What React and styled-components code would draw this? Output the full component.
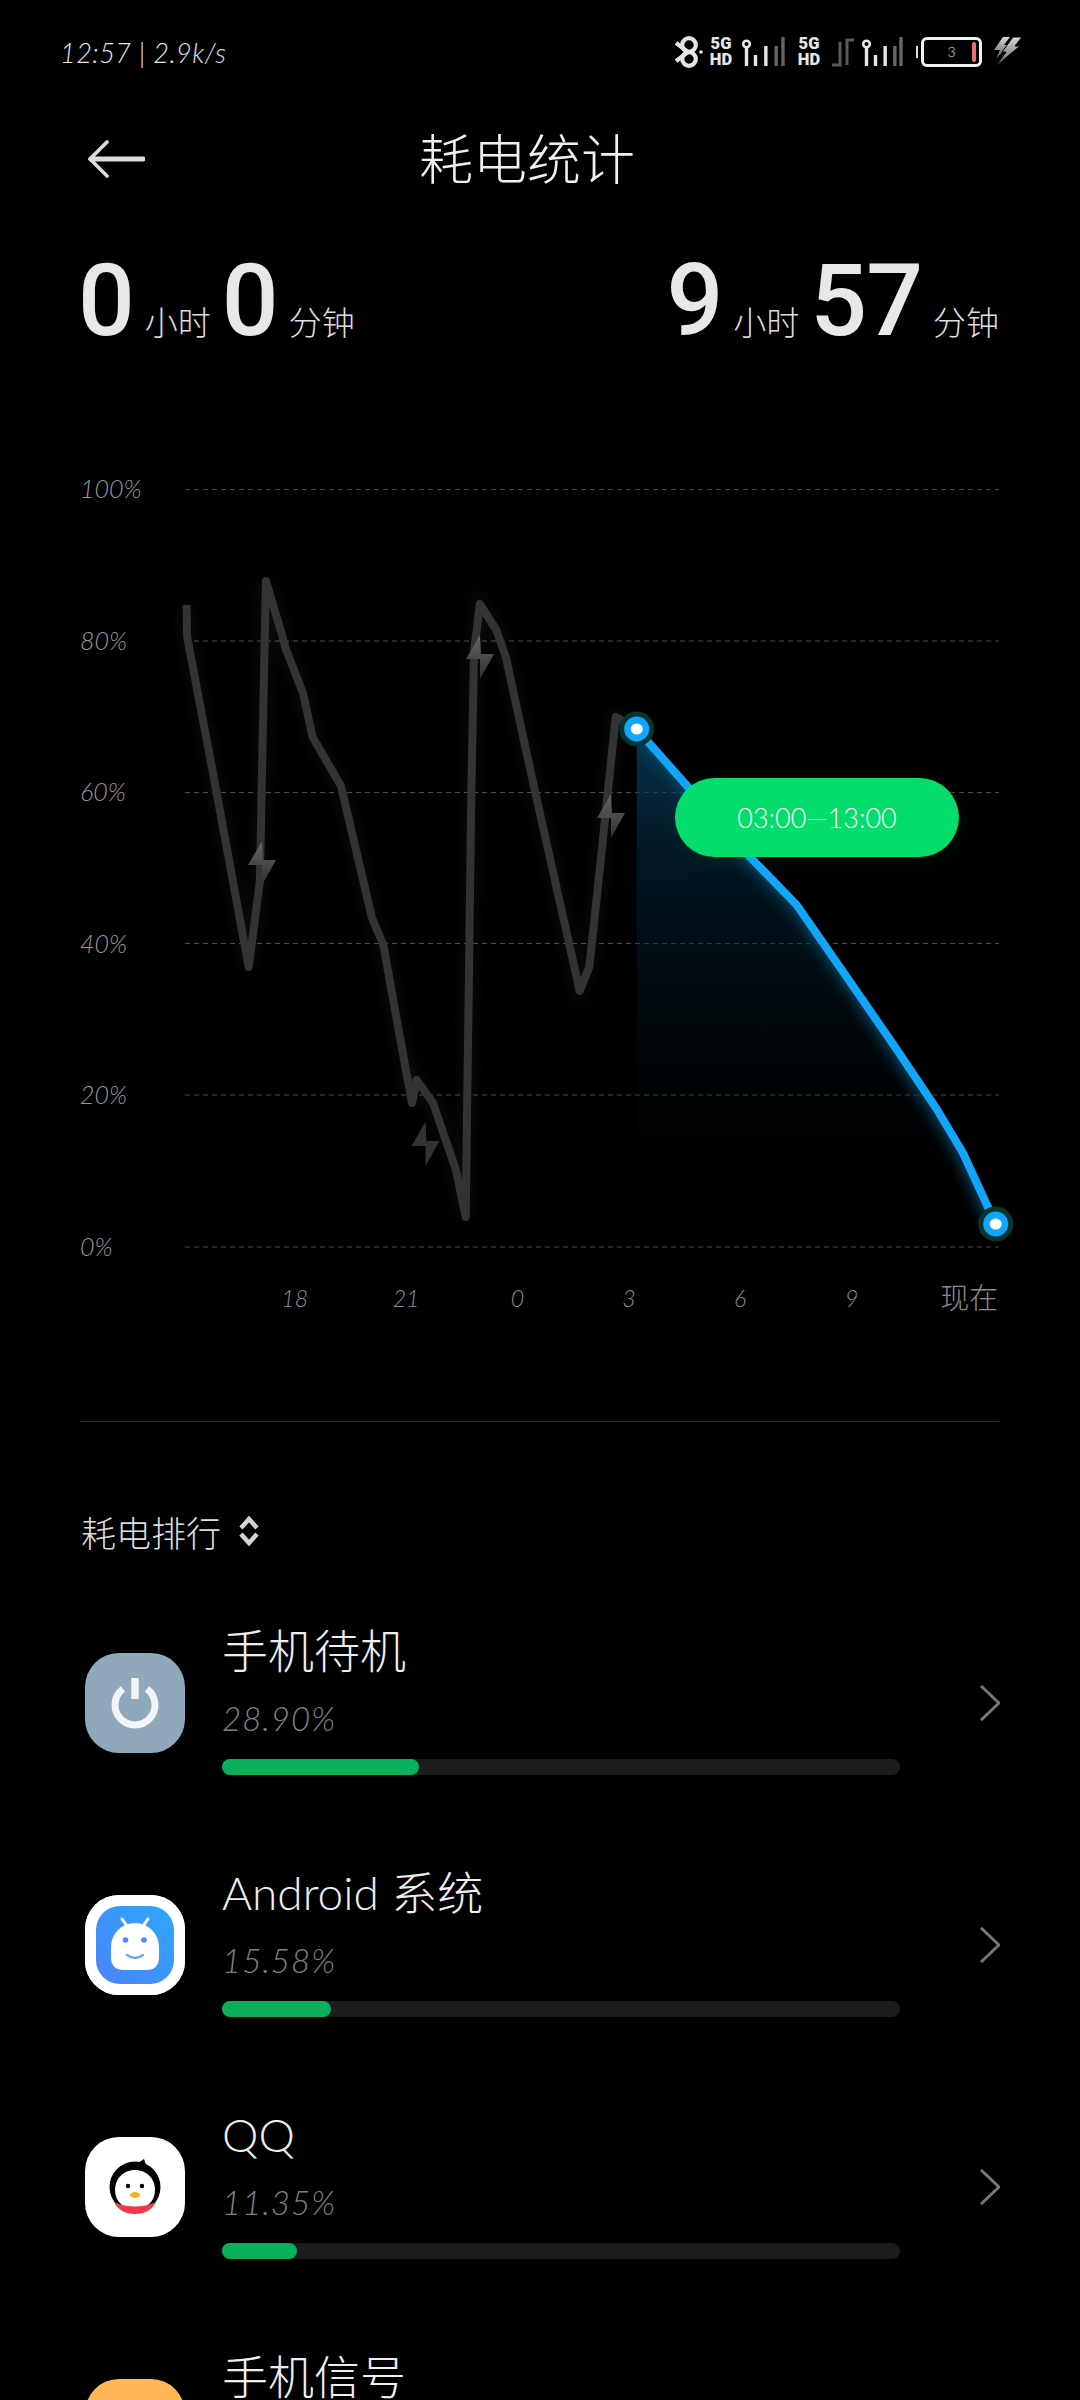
import React from "react";
import styled, { createGlobalStyle } from "styled-components";

const FONT = `Lato, "Noto Sans CJK SC", sans-serif`;

const GlobalStyle = createGlobalStyle`
  html, body {
    margin: 0;
    padding: 0;
    background: #000;
  }
`;

const Page = styled.div`
  width: 1080px;
  height: 2400px;
  overflow: hidden;
  background: #000;
  color: #eee;
  font-family: ${FONT};
  font-weight: 300;
`;

const StatusBar = styled.div`
  height: 104px;
  display: flex;
  align-items: center;
  padding: 0 58px 0 60px;
`;
const Clock = styled.div`
  flex: 1;
  font-size: 27px;
  font-style: italic;
  letter-spacing: 0.5px;
  color: #e4e4e4;
`;
const StatusItem = styled.div`
  display: flex;
  margin-left: ${(props) => props.$gap || 0}px;
`;
const NetType = styled.div`
  width: 26px;
  font-family: Roboto, sans-serif;
  font-weight: 900;
  font-size: 16.5px;
  line-height: 16px;
  text-align: center;
  color: #e6e6e6;
`;
const Battery = styled.div`
  position: relative;
  width: 61px;
  height: 30px;
  box-sizing: border-box;
  border: 3px solid #f2f2f2;
  border-radius: 6px;
  font-size: 14px;
  line-height: 24px;
  text-align: center;
  color: #ddd;
  &::before {
    content: "";
    position: absolute;
    left: -8px;
    top: 6px;
    width: 2px;
    height: 12px;
    background: #ddd;
  }
  &::after {
    content: "";
    position: absolute;
    right: 3px;
    top: 2px;
    width: 4px;
    height: 20px;
    border-radius: 2px;
    background: #e87272;
  }
`;

const Header = styled.div`
  height: 104px;
  display: flex;
  align-items: center;
  padding-left: 88px;
`;
const BackArrow = styled.svg`
  display: block;
  margin-top: 6px;
`;
const Title = styled.div`
  margin-left: 274px;
  font-size: 54px;
  color: #f0f0f0;
`;

const Stats = styled.div`
  height: 162px;
  box-sizing: border-box;
  padding: 33px 81px 0 78px;
  display: flex;
  justify-content: space-between;
`;
const StatGroup = styled.div`
  display: flex;
  align-items: baseline;
  gap: 11px;
`;
const Num = styled.span`
  font-family: Roboto, sans-serif;
  font-weight: 500;
  font-size: 100px;
  line-height: 120px;
  letter-spacing: -1px;
  color: #e8e8e8;
`;
const Unit = styled.span`
  font-size: 33px;
  color: #ddd;
`;

const Chart = styled.div`
  position: relative;
  margin-top: 100px;
  padding-left: 80px;
  display: grid;
  grid-template-columns: 105px 814px;
`;
const YAxis = styled.div`
  height: 800px;
  box-sizing: border-box;
  padding: 3px 0 9px;
  display: flex;
  flex-direction: column;
  justify-content: space-between;
`;
const YLabel = styled.div`
  height: 30px;
  line-height: 30px;
  font-size: 25px;
  font-style: italic;
  color: #999;
`;
const Plot = styled.svg`
  display: block;
  width: 814px;
  height: 800px;
  overflow: visible;
`;
const XAxis = styled.div`
  grid-column: 2;
  margin-top: 8px;
  padding-left: 54px;
  display: grid;
  grid-template-columns: repeat(6, 111.4px) 91px;
`;
const XLabel = styled.div`
  font-size: ${(props) => (props.$end ? 29 : 23)}px;
  line-height: 40px;
  font-style: ${(props) => (props.$end ? "normal" : "italic")};
  text-align: ${(props) => (props.$end ? "right" : "center")};
  color: #8c8c8c;
`;
const Pill = styled.div`
  position: absolute;
  left: 675px;
  top: 308px;
  width: 284px;
  height: 79px;
  border-radius: 40px;
  background: #04dc6b;
  box-shadow: 0 4px 26px rgba(4, 220, 107, 0.08);
  font-size: 27px;
  line-height: 79px;
  text-align: center;
  color: #fff;
`;

const Divider = styled.div`
  margin: 103px 81px 0 80px;
  height: 1px;
  background: #262626;
`;

const SectionHead = styled.div`
  margin-top: 89px;
  height: 40px;
  padding-left: 81px;
  display: flex;
  align-items: center;
  gap: 18px;
  font-size: 35px;
  color: #ddd;
`;

const List = styled.div`
  margin-top: 31px;
`;
const Row = styled.div`
  height: 242px;
  padding-left: 85px;
  display: grid;
  grid-template-columns: 100px 678px 100px;
  column-gap: 37px;
  align-items: center;
`;
const IconBox = styled.div`
  width: 100px;
  height: 100px;
  border-radius: 34px;
  overflow: hidden;
  background: ${(props) => props.$bg};
`;
const RowBody = styled.div`
  align-self: start;
  padding-top: 39px;
`;
const RowTitle = styled.div`
  height: 60px;
  line-height: 60px;
  font-size: 46px;
  color: #eee;
`;
const RowPercent = styled.div`
  margin-top: 17px;
  height: 40px;
  line-height: 40px;
  font-size: 33px;
  font-style: italic;
  letter-spacing: 1px;
  color: #808080;
`;
const Track = styled.div`
  margin-top: 21px;
  height: 16px;
  border-radius: 8px;
  background: #1c1c1c;
`;
const Fill = styled.div`
  height: 100%;
  border-radius: 8px;
  background: #09b059;
`;
const Chevron = styled.svg`
  display: block;
  margin-left: 43px;
`;

const GREY_LINE = [
  [186.7, 605], [187, 636], [213, 773], [248.7, 967], [259.8, 882], [265.9, 581],
  [282, 635], [285.8, 649], [303, 693], [312.6, 737], [341, 786], [372, 918],
  [383.4, 945], [396.8, 1020], [412, 1103], [416.7, 1080], [433, 1103], [456, 1170],
  [465.7, 1217], [471.4, 789], [474, 652], [479.8, 604], [496.3, 630], [505.8, 657],
  [534.5, 789], [569, 943], [579.7, 991], [589.3, 967], [599.6, 871], [615.7, 717],
  [636.7, 729],
];
const BLUE_LINE = [
  [636.7, 729], [688, 787], [750, 857], [796.7, 905], [846.7, 977],
  [893, 1044], [936.7, 1109], [963, 1153], [995.7, 1224],
];
const toPoints = (list) => list.map((p) => p.join(",")).join(" ");

const GRID_Y = [489.5, 641, 792.5, 943.5, 1095, 1247];
const Y_LABELS = ["100%", "80%", "60%", "40%", "20%", "0%"];
const X_LABELS = ["18", "21", "0", "3", "6", "9"];

const BOLTS = [
  { x: 262, y: 863, fill: "url(#boltFade)" },
  { x: 480, y: 657, fill: "url(#boltFade)" },
  { x: 611, y: 816, fill: "url(#boltFade)" },
  { x: 425.5, y: 1144, fill: "#333" },
];

function Node({ x, y }) {
  return (
    <g>
      <circle cx={x} cy={y} r="17.5" fill="#06352f" />
      <circle cx={x} cy={y} r="12.5" fill="#12a6fb" />
      <ellipse cx={x} cy={y} rx="6" ry="5.5" fill="#fff" />
    </g>
  );
}

function UsageChart() {
  const area = `${toPoints(BLUE_LINE)} 995.7,1247 636.7,1247`;
  return (
    <Plot viewBox="185 470 814 800">
      <defs>
        <linearGradient id="areaFade" gradientUnits="userSpaceOnUse" x1="0" y1="729" x2="0" y2="1235">
          <stop offset="0" stopColor="#0a4a70" stopOpacity="0.7" />
          <stop offset="0.25" stopColor="#052a40" stopOpacity="0.55" />
          <stop offset="1" stopColor="#000" stopOpacity="0" />
        </linearGradient>
        <linearGradient id="boltFade" x1="0" y1="0" x2="0" y2="1">
          <stop offset="0" stopColor="#666" />
          <stop offset="1" stopColor="#2e2e2e" />
        </linearGradient>
        <clipPath id="areaClip">
          <polygon points={area} />
        </clipPath>
        <filter id="soft" x="-20%" y="-20%" width="140%" height="140%">
          <feGaussianBlur stdDeviation="7" />
        </filter>
      </defs>
      {GRID_Y.map((y) => (
        <line key={y} x1="185" x2="999" y1={y} y2={y} stroke="#4a4a4a" strokeWidth="1" strokeDasharray="5 4" />
      ))}
      <polygon points={area} fill="url(#areaFade)" />
      <g clipPath="url(#areaClip)">
        <polyline points={toPoints(BLUE_LINE)} fill="none" stroke="#0a4a6a" strokeWidth="14" filter="url(#soft)" />
      </g>
      <polyline points={toPoints(GREY_LINE)} fill="none" stroke="#fff" strokeOpacity="0.04" strokeWidth="14" filter="url(#soft)" />
      <polyline points={toPoints(GREY_LINE)} fill="none" stroke="#333" strokeWidth="8" strokeLinejoin="round" />
      {BOLTS.map((b) => (
        <polygon
          key={b.x}
          transform={`translate(${b.x} ${b.y})`}
          points="0,-22 -14,2 0,2 0,22 14,-3 1,-3"
          fill={b.fill}
        />
      ))}
      <polyline points={toPoints(BLUE_LINE)} fill="none" stroke="#12a6fb" strokeWidth="8" strokeLinejoin="round" />
      <Node x={636.7} y={729} />
      <Node x={995.7} y={1224} />
    </Plot>
  );
}

function SignalIcon({ width }) {
  const step = (width - 9) / 3;
  return (
    <svg width={width} height="30" viewBox={`0 0 ${width} 30`} fill="none" strokeWidth="3.4">
      <circle cx="4.5" cy="7" r="3.3" stroke="#e6e6e6" strokeWidth="2.6" />
      <path d="M4.5 11V29" stroke="#e6e6e6" />
      <path d={`M13.5 18V29M${13.5 + step - 1} 9V29`} stroke="#e6e6e6" />
      <path d={`M${13.5 + step * 2 - 2} 9V29M${width - 2} 0V29`} stroke="#666" />
    </svg>
  );
}

function StatusIcons() {
  return (
    <>
      <StatusItem>
        <svg width="28" height="32" viewBox="0 0 28 32" fill="none" stroke="#e6e6e6" strokeWidth="4.2">
          <path d="M1 7L13 16L1 25" />
          <circle cx="14" cy="9" r="6.8" />
          <circle cx="14" cy="23" r="6.8" />
          <circle cx="26" cy="16" r="1.8" fill="#e6e6e6" strokeWidth="0" />
        </svg>
      </StatusItem>
      <StatusItem $gap={5}><NetType>5G<br />HD</NetType></StatusItem>
      <StatusItem $gap={8}><SignalIcon width={43} /></StatusItem>
      <StatusItem $gap={11}><NetType>5G<br />HD</NetType></StatusItem>
      <StatusItem $gap={10}>
        <svg width="22" height="30" viewBox="0 0 22 30" fill="none" stroke="#5a5a5a" strokeWidth="3">
          <path d="M0 28H8V5" />
          <path d="M15 28V3H22" />
        </svg>
      </StatusItem>
      <StatusItem $gap={8}><SignalIcon width={41} /></StatusItem>
      <StatusItem $gap={18}><Battery>3</Battery></StatusItem>
      <StatusItem $gap={11}>
        <svg width="29" height="30" viewBox="0 0 29 30">
          <defs>
            <linearGradient id="chargeFade" x1="0" y1="0" x2="0" y2="1">
              <stop offset="0" stopColor="#d8d8d8" />
              <stop offset="1" stopColor="#5a5a5a" />
            </linearGradient>
          </defs>
          <path d="M10 0H17L11 8H15L3 22L7 13H1Z" fill="url(#chargeFade)" />
          <path d="M20 0H29L22 9H27L2 30L13 15H9Z" fill="url(#chargeFade)" stroke="#000" strokeWidth="1" />
        </svg>
      </StatusItem>
    </>
  );
}

function PowerIcon() {
  return (
    <svg width="100" height="100" viewBox="0 0 100 100" fill="none" stroke="#f2f5f7" strokeWidth="7">
      <path d="M38 36A20 20 0 1 0 62 36" />
      <path d="M50 25V46" strokeWidth="7.5" />
    </svg>
  );
}

function AndroidIcon() {
  return (
    <svg width="100" height="100" viewBox="0 0 100 100">
      <defs>
        <linearGradient id="androidBg" x1="1" y1="0" x2="0" y2="1">
          <stop offset="0" stopColor="#2ca8fb" />
          <stop offset="1" stopColor="#4b83fa" />
        </linearGradient>
      </defs>
      <rect x="0" y="0" width="100" height="100" fill="#fff" />
      <rect x="11" y="11" width="78" height="78" rx="24" fill="url(#androidBg)" />
      <path d="M37 24L42 31M63 24L58 31" stroke="#fff" strokeWidth="3" strokeLinecap="round" />
      <path d="M26 52A24 24 0 0 1 74 52V62Q74 75 61 75H39Q26 75 26 62Z" fill="#fff" />
      <circle cx="40.5" cy="45" r="2.8" fill="#4b8dfa" />
      <circle cx="59" cy="45" r="2.8" fill="#4b8dfa" />
      <path d="M42 60Q50 66 58 60" fill="none" stroke="#6aa5fb" strokeWidth="2.4" strokeLinecap="round" />
    </svg>
  );
}

function QQIcon() {
  return (
    <svg width="100" height="100" viewBox="0 0 100 100">
      <circle cx="50" cy="50" r="25.5" fill="#000" />
      <path d="M53 26L59 22L61 28Z" fill="#000" />
      <path d="M50 33C38 33 30 42 30 53C30 65 39 72 50 72C61 72 70 65 70 53C70 42 62 33 50 33Z" fill="#fff" />
      <path d="M29 65Q50 74 71 65Q65 77 50 77Q35 77 29 65Z" fill="#ee3a4b" />
      <circle cx="43" cy="49" r="2.2" fill="#000" />
      <circle cx="57" cy="49" r="2.2" fill="#000" />
      <ellipse cx="50" cy="58" rx="5" ry="3" fill="#fbb117" />
    </svg>
  );
}

const APPS = [
  { name: "手机待机", percent: "28.90%", width: 197, bg: "#8fa9bb", icon: <PowerIcon /> },
  { name: "Android 系统", percent: "15.58%", width: 109, bg: "#fff", icon: <AndroidIcon /> },
  { name: "QQ", percent: "11.35%", width: 75, bg: "#fff", icon: <QQIcon /> },
  { name: "手机信号", bg: "#ffb655", icon: null },
];

export default function App() {
  return (
    <Page>
      <GlobalStyle />
      <StatusBar>
        <Clock>12:57 | 2.9k/s</Clock>
        <StatusIcons />
      </StatusBar>

      <Header>
        <BackArrow width="57" height="38" viewBox="0 0 57 38" fill="none" stroke="#dcdcdc" strokeLinecap="round">
          <path d="M19 2L2 19L19 36" strokeWidth="3.6" />
          <path d="M3 19H55" strokeWidth="5" />
        </BackArrow>
        <Title>耗电统计</Title>
      </Header>

      <Stats>
        <StatGroup>
          <Num>0</Num><Unit>小时</Unit>
          <Num>0</Num><Unit>分钟</Unit>
        </StatGroup>
        <StatGroup>
          <Num>9</Num><Unit>小时</Unit>
          <Num>57</Num><Unit>分钟</Unit>
        </StatGroup>
      </Stats>

      <Chart>
        <YAxis>
          {Y_LABELS.map((label) => <YLabel key={label}>{label}</YLabel>)}
        </YAxis>
        <UsageChart />
        <XAxis>
          {X_LABELS.map((label) => <XLabel key={label}>{label}</XLabel>)}
          <XLabel $end>现在</XLabel>
        </XAxis>
        <Pill>03:00—13:00</Pill>
      </Chart>

      <Divider />

      <SectionHead>
        耗电排行
        <svg width="20" height="30" viewBox="0 0 20 30" fill="none" stroke="#d4d4d4" strokeWidth="4.5">
          <path d="M2 12L10 3L18 12" />
          <path d="M2 18L10 27L18 18" />
        </svg>
      </SectionHead>

      <List>
        {APPS.map((app) => (
          <Row key={app.name}>
            <IconBox $bg={app.bg}>{app.icon}</IconBox>
            <RowBody>
              <RowTitle>{app.name}</RowTitle>
              {app.percent && <RowPercent>{app.percent}</RowPercent>}
              {app.percent && (
                <Track>
                  <Fill style={{ width: app.width }} />
                </Track>
              )}
            </RowBody>
            <Chevron width="20" height="36" viewBox="0 0 20 36" fill="none" stroke="#777" strokeWidth="3">
              <path d="M1 1L19 18L1 35" />
            </Chevron>
          </Row>
        ))}
      </List>
    </Page>
  );
}
